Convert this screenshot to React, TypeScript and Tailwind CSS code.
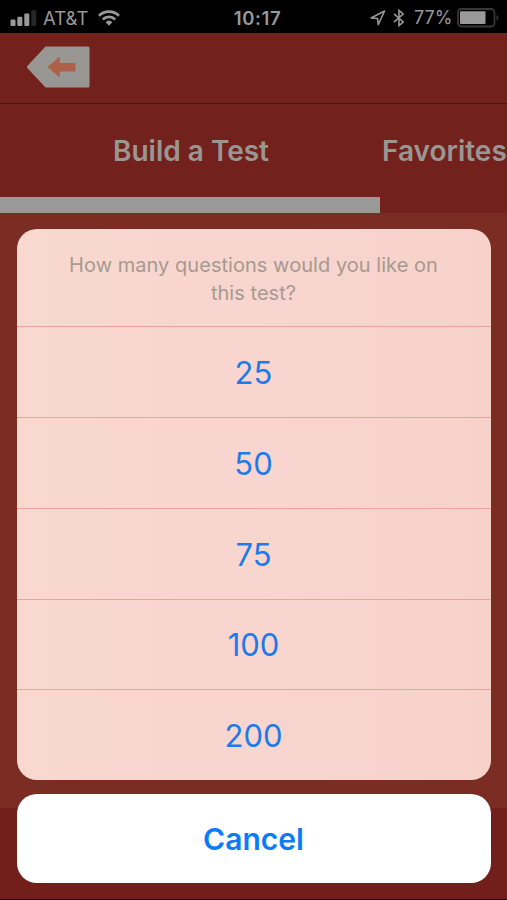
const options = ['25', '50', '75', '100', '200'];

function StatusBar() {
  return (
    <div className="grid h-[33px] shrink-0 grid-cols-3 items-center bg-black pt-[3px] text-[18px] leading-none text-[#999]">
      <div className="flex items-center pl-[10px]">
        <svg width="27" height="17" viewBox="0 0 27 17" className="shrink-0" fill="currentColor">
          <rect x="0.5" y="9.5" width="5" height="6.5" rx="1.2" />
          <rect x="7.3" y="6.7" width="5" height="9.3" rx="1.2" />
          <rect x="14.3" y="3.5" width="5" height="12.5" rx="1.2" />
          <rect x="21.3" y="0.3" width="5" height="15.7" rx="1.2" fill="#262626" />
        </svg>
        <span className="ml-[6px] w-[46px] text-[18.5px] whitespace-nowrap">AT&amp;T</span>
        <svg width="22" height="16" viewBox="0 0 22 16" className="ml-[9px] shrink-0" fill="none" stroke="currentColor" strokeWidth="2.7">
          <path d="M1 5.7a14.3 14.3 0 0 1 20 0" />
          <path d="M4.8 9.4a9 9 0 0 1 12.4 0" />
          <path d="M7.6 12.2a5 5 0 0 1 6.8 0L11 15.7z" fill="currentColor" stroke="none" />
        </svg>
      </div>
      <div className="pl-[8px] text-center text-[18.5px] font-semibold tracking-[0.6px]">10:17</div>
      <div className="flex items-center justify-end pr-[8px]">
        <svg width="16" height="16" viewBox="0 0 16 16" fill="none" stroke="currentColor" strokeWidth="1.5" strokeLinejoin="round">
          <path d="M1 8 14.6 1 8.2 14.6 7.6 8.6z" />
        </svg>
        <svg width="12" height="18" viewBox="0 0 12 18" className="ml-[7px]" fill="none" stroke="currentColor" strokeWidth="1.6">
          <path d="M1 4.8 10.2 13 6 16.6V1.4L10.2 5 1 13.2" />
        </svg>
        <span className="ml-[9px] w-[39px] whitespace-nowrap">77%</span>
        <svg width="42" height="20" viewBox="0 0 42 20" className="ml-[4px] shrink-0">
          <rect x="1" y="1" width="36.5" height="17.5" rx="3.5" fill="none" stroke="#383838" strokeWidth="1.8" />
          <rect x="3" y="3.3" width="25.5" height="12.6" rx="1" fill="#999" />
          <path d="M39.5 7c2.3.8 2.3 5 0 5.8z" fill="#383838" />
        </svg>
      </div>
    </div>
  );
}

function NavBar() {
  return (
    <header className="flex h-[71px] shrink-0 items-start border-b border-[#4d1411] bg-[#73211d] pt-[13px] pl-[27px]">
      <button type="button" aria-label="Back">
        <svg width="63" height="42" viewBox="0 0 63 42" className="block">
          <path d="M18.5.5H61a1.5 1.5 0 0 1 1.5 1.5V40a1.5 1.5 0 0 1-1.5 1.5H18.5L.3 22Q-.3 21 .3 20z" fill="#999793" />
          <path d="M20.5 21 32.8 10.5V17H48.500v8.500H32.8V31.500z" fill="#ae6048" />
        </svg>
      </button>
    </header>
  );
}

function Tabs() {
  return (
    <nav className="flex h-[109px] shrink-0 overflow-hidden bg-[#73211d] text-[28px] font-semibold whitespace-nowrap text-[#9a9793]">
      <div className="flex w-[380px] shrink-0 flex-col">
        <div className="flex flex-1 items-center justify-center pl-[2px]">Build a Test</div>
        <div className="h-[16px] bg-[#999997]" />
      </div>
      <div className="flex h-[93px] shrink-0 items-center pl-[2px]">Favorites</div>
    </nav>
  );
}

function ActionSheet() {
  return (
    <div className="absolute inset-x-[16.5px] top-[229px] flex flex-col gap-[13.5px]">
      <div className="overflow-hidden rounded-[20px] bg-linear-to-r from-[#f8d8cf] via-[#f8d5cf] to-[#f6d2ca]">
        <p className="h-[97.3px] px-10 pt-[21.5px] text-center text-[20px] leading-[28px] tracking-[0.04px] text-[#a69a90]">
          How many questions would you like on
          <br />
          this test?
        </p>
        {options.map((option) => (
          <button
            key={option}
            type="button"
            className="flex h-[90.8px] w-full items-center justify-center border-t border-[#e9a49b] pt-[2px] text-[31px] text-[#1d7be9]"
          >
            {option}
          </button>
        ))}
      </div>
      <button type="button" className="h-[89.5px] rounded-[20px] bg-white pt-[2px] text-[30px] font-semibold text-[#0b7bfa]">
        Cancel
      </button>
    </div>
  );
}

export default function App() {
  return (
    <div className="relative flex h-[900px] w-[507px] flex-col overflow-hidden bg-[#7b2d23] font-['Inter',sans-serif]">
      <StatusBar />
      <NavBar />
      <Tabs />
      <main className="flex-1" />
      <footer className="h-[92px] shrink-0 border-b border-black bg-[#721f1c]" />
      <ActionSheet />
    </div>
  );
}
